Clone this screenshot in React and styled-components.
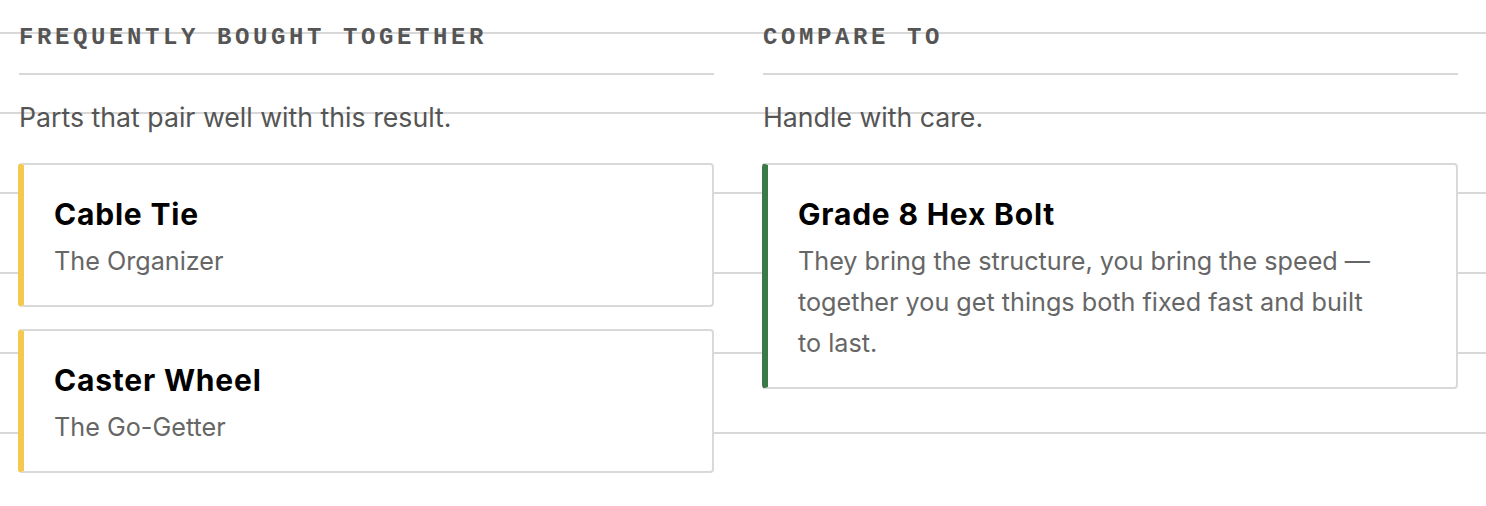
import React from "react";
import styled, { createGlobalStyle } from "styled-components";

const GlobalStyle = createGlobalStyle`
  html, body {
    margin: 0;
    padding: 0;
    min-height: 100%;
  }
  body {
    font-family: Inter, "Helvetica Neue", Helvetica, "Liberation Sans", Arial, sans-serif;
    background-color: #ffffff;
    /* ruled paper */
    background-image: repeating-linear-gradient(
      to bottom,
      transparent 0,
      transparent 32px,
      #d8d8d8 32px,
      #d8d8d8 34px,
      transparent 34px,
      transparent 80px
    );
    min-height: 506px;
  }
`;

const Page = styled.div`
  display: grid;
  grid-template-columns: 696px 696px;
  column-gap: 48px;
  padding: 23px 28px 0 18px;
`;

const Column = styled.section`
  display: flex;
  flex-direction: column;
`;

const Heading = styled.h2`
  margin: 0 0 0 1px;
  padding: 0 0 20px;
  font-family: "Liberation Mono", "Courier New", monospace;
  font-weight: 700;
  font-size: 24px;
  line-height: 30px;
  letter-spacing: 0.15em;
  text-transform: uppercase;
  color: #555;
  border-bottom: 2px solid #d8d8d8;
`;

const Intro = styled.p`
  margin: 0;
  padding: 24px 0 0 1px;
  font-size: 26.7px;
  line-height: 36px;
  color: #555;
`;

const CardList = styled.div`
  display: flex;
  flex-direction: column;
  gap: 22px;
  margin-top: 28px;
`;

const Card = styled.article`
  background: #fff;
  border: 2px solid #d9d9d9;
  border-left: 6px solid ${(p) => p.$accent};
  border-radius: 4px;
  padding: 31px 70px 23px 30px;
`;

const Name = styled.h3`
  margin: 0;
  font-size: 30px;
  font-weight: 700;
  line-height: 36px;
  letter-spacing: 0.8px;
  color: #000;
`;

const Blurb = styled.p`
  margin: 9px 0 0;
  font-size: 25.2px;
  line-height: 41px;
  color: #666;
`;

const pairs = [
  { name: "Cable Tie", blurb: "The Organizer" },
  { name: "Caster Wheel", blurb: "The Go-Getter" },
];

const rivals = [
  {
    name: "Grade 8 Hex Bolt",
    blurb:
      "They bring the structure, you bring the speed — together you get things both fixed fast and built to last.",
  },
];

export default function App() {
  return (
    <>
      <GlobalStyle />
      <Page>
        <Column>
          <Heading>Frequently Bought Together</Heading>
          <Intro>Parts that pair well with this result.</Intro>
          <CardList>
            {pairs.map((p) => (
              <Card key={p.name} $accent="#f5c94f">
                <Name>{p.name}</Name>
                <Blurb>{p.blurb}</Blurb>
              </Card>
            ))}
          </CardList>
        </Column>
        <Column>
          <Heading>Compare To</Heading>
          <Intro>Handle with care.</Intro>
          <CardList>
            {rivals.map((p) => (
              <Card key={p.name} $accent="#3b7a47">
                <Name>{p.name}</Name>
                <Blurb>{p.blurb}</Blurb>
              </Card>
            ))}
          </CardList>
        </Column>
      </Page>
    </>
  );
}
